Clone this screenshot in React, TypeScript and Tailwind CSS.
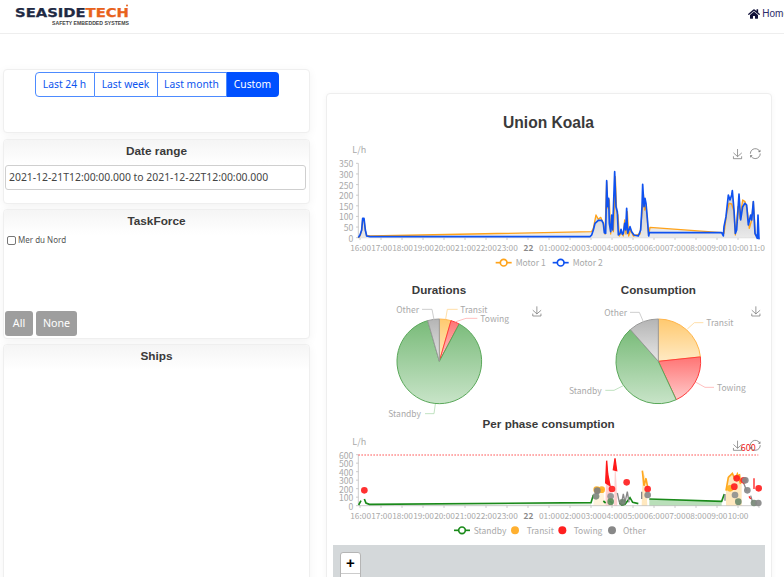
import React from "react";
import { FaHome } from "react-icons/fa";

const CHART_FONT = "'Noto Sans CJK SC', 'Noto Sans', sans-serif";
const HOURS = ["16:00","17:00","18:00","19:00","20:00","21:00","22:00","23:00","22","01:00","02:00","03:00","04:00","05:00","06:00","07:00","08:00","09:00","10:00","11:00"];
const GREY = "#a9a9a9";

function T({ x, y, children, anchor = "start", fill = GREY, size = 25.5, weight = 400, family = CHART_FONT }: any) {
  return (
    <text x={x} y={y} textAnchor={anchor} dominantBaseline="central" fill={fill} fontSize={size} fontWeight={weight} fontFamily={family}>
      {children}
    </text>
  );
}

function SaveIcon({ x, y }: { x: number; y: number }) {
  return (
    <g transform={`translate(${x} ${y}) scale(0.5)`} fill="none" stroke="#666" strokeWidth={4}>
      <path d="M4.7,22.9L29.3,45.5L54.7,23.4M4.6,43.6L4.6,58L53.8,58L53.8,43.6M29.2,45.1L29.2,0" />
    </g>
  );
}

function RestoreIcon({ x, y }: { x: number; y: number }) {
  return (
    <g transform={`translate(${x} ${y}) scale(0.53)`} fill="none" stroke="#666" strokeWidth={4}>
      <path d="M47,18.9h9.8V8.7M56.3,20.1C52.1,9,40.5,0.6,26.8,2.1C12.6,3.7,1.6,16.2,2.1,30.6M13,41.1H3.1v10.2M3.7,39.9c4.2,11.1,15.8,19.5,29.5,18c14.2-1.6,25.2-14.1,24.7-28.5" />
    </g>
  );
}

function Axes({ base, top, labels, hours, labelY }: { base: number; top: number; labels: string[]; hours: string[]; labelY: number }) {
  const step = (base - top) / (labels.length - 1);
  return (
    <g>
      <path d={`M85,${top}V${base}H1287`} fill="none" stroke="#b5b5b5" strokeWidth={2} />
      {labels.map((l, i) => (
        <g key={l}>
          <path d={`M78,${base - i * step}H85`} stroke="#b5b5b5" strokeWidth={2} />
          <T x={70} y={base - i * step} anchor="end" size={26}>{l}</T>
        </g>
      ))}
      {HOURS.map((_, i) => (
        <path key={i} d={`M${90 + 63 * i},${base}v7`} stroke="#b5b5b5" strokeWidth={2} />
      ))}
      {hours.map((h, i) => (
        <T key={i} x={92 + 62.9 * i} y={labelY} anchor="middle" size={25} weight={h === "22" ? 700 : 400} fill={h === "22" ? "#8a8a8a" : GREY}>{h}</T>
      ))}
    </g>
  );
}

const M2 = "85,293 90,285 95,270 98,235 102,235 106,270 110,288 120,290 780,290 785,285 790,270 795,250 805,241 815,241 820,250 823,278 827,280 830,122 833,200 836,175 838,250 842,275 845,225 848,270 854,95 858,200 862,215 865,285 870,280 873,268 877,283 880,280 884,250 887,270 890,205 893,280 897,270 900,260 905,275 912,285 925,288 932,270 936,200 938,133 942,200 945,175 948,190 952,235 956,288 958,278 1175,278 1180,288 1182,260 1188,230 1195,165 1200,180 1205,165 1207,152 1212,210 1216,280 1220,270 1227,162 1232,240 1238,200 1245,190 1250,195 1255,255 1262,225 1265,240 1270,185 1275,280 1282,295 1284,225 1287,298";
const M1 = "85,293 90,288 95,272 98,238 102,238 106,272 110,286 120,288 785,275 790,265 798,225 805,238 812,232 820,250 825,282 830,125 834,205 838,180 842,282 846,235 850,275 856,110 860,215 864,225 868,288 874,275 880,288 884,240 888,282 892,215 896,288 902,270 910,288 930,282 936,220 940,160 944,210 948,195 952,240 956,285 960,262 1175,278 1182,280 1190,220 1197,190 1205,192 1212,215 1216,285 1224,200 1230,235 1238,180 1245,185 1252,210 1258,265 1265,240 1270,185 1276,285 1284,290";

function TopChart() {
  return (
    <svg viewBox="0 0 1305 405" className="mb-[-1px] block h-[135px] w-[435px]">
      <defs>
        <linearGradient id="grey-area" gradientUnits="userSpaceOnUse" x1="0" y1="100" x2="0" y2="293">
          <stop offset="0" stopColor="#a0a0a8" />
          <stop offset="1" stopColor="#e8e8e8" />
        </linearGradient>
      </defs>
      <T x={67} y={27} size={27}>L/h</T>
      <Axes base={293} top={70} labels={["0","50","100","150","200","250","300","350"]} hours={HOURS} labelY={321} />
      <polygon points={`${M1} 1284,293 85,293`} fill="url(#grey-area)" opacity={0.7} />
      <polygon points={`${M2} 1287,293 85,293`} fill="url(#grey-area)" opacity={0.7} />
      <polyline points={M1} fill="none" stroke="#ffa31a" strokeWidth={4} strokeLinejoin="round" />
      <polyline points={M2} fill="none" stroke="#0f52f0" strokeWidth={5} strokeLinejoin="round" />
      <SaveIcon x={1208} y={27} />
      <RestoreIcon x={1260} y={25} />
      <path d="M497,368H545" stroke="#ffa31a" strokeWidth={5} />
      <circle cx={521} cy={368} r={10} fill="#fff" stroke="#ffa31a" strokeWidth={5} />
      <T x={557} y={367}>Motor 1</T>
      <path d="M668,368H716" stroke="#0f52f0" strokeWidth={5} />
      <circle cx={692} cy={368} r={10} fill="#fff" stroke="#0f52f0" strokeWidth={5} />
      <T x={728} y={367}>Motor 2</T>
    </svg>
  );
}

function slice(cx: number, cy: number, r: number, a: number, b: number) {
  const p = (d: number) => {
    const t = (d * Math.PI) / 180;
    return `${(cx + r * Math.sin(t)).toFixed(1)},${(cy - r * Math.cos(t)).toFixed(1)}`;
  };
  return `M${cx},${cy}L${p(a)}A${r},${r} 0 ${b - a > 180 ? 1 : 0} 1 ${p(b)}Z`;
}

function PieDefs() {
  const g = (id: string, a: string, b: string) => (
    <linearGradient id={id} x1="0" y1="0" x2="0" y2="1">
      <stop offset="0" stopColor={a} />
      <stop offset="1" stopColor={b} />
    </linearGradient>
  );
  return (
    <defs>
      {g("pie-green", "#79bb79", "#c8e4c8")}
      {g("pie-orange", "#ffc96f", "#ffeac4")}
      {g("pie-red", "#ff7474", "#ffcaca")}
      {g("pie-grey", "#b4b4b4", "#e6e6e6")}
    </defs>
  );
}

function Pie({ cx, angles }: { cx: number; angles: number[] }) {
  const cy = 262;
  const r = 127;
  const [a, b, c] = angles;
  return (
    <g strokeWidth={3}>
      <path d={slice(cx, cy, r, 0, a)} fill="url(#pie-orange)" stroke="#ffb54a" />
      <path d={slice(cx, cy, r, a, b)} fill="url(#pie-red)" stroke="#ff3d3d" />
      <path d={slice(cx, cy, r, b, c)} fill="url(#pie-green)" stroke="#5aa85a" />
      <path d={slice(cx, cy, r, c, 360)} fill="url(#pie-grey)" stroke="#9a9a9a" />
    </g>
  );
}

function Pies() {
  return (
    <div className="flex">
      <svg viewBox="-90 0 660 426" className="block h-[142px] w-[220px] overflow-visible">
        <PieDefs />
        <T x={237} y={45} anchor="middle" size={35} weight={700} fill="#3a3a3a" family="'Liberation Sans', sans-serif">Durations</T>
        <Pie cx={238} angles={[16, 28, 344]} />
        <path d="M186,106H216L222,137" fill="none" stroke="#c4c4c4" strokeWidth={2.5} />
        <path d="M293,106H262L257,135" fill="none" stroke="#ffd998" strokeWidth={2.5} />
        <path d="M352,133H318L288,143" fill="none" stroke="#ffb3b3" strokeWidth={2.5} />
        <path d="M195,419H222L226,390" fill="none" stroke="#b5dcb5" strokeWidth={2.5} />
        <T x={177} y={105} anchor="end">Other</T>
        <T x={301} y={105}>Transit</T>
        <T x={361} y={133}>Towing</T>
        <T x={183} y={418} anchor="end">Standby</T>
        <SaveIcon x={516} y={97} />
      </svg>
      <svg viewBox="570 0 660 426" className="block h-[142px] w-[220px] overflow-visible">
        <T x={895} y={45} anchor="middle" size={35} weight={700} fill="#3a3a3a" family="'Liberation Sans', sans-serif">Consumption</T>
        <Pie cx={895} angles={[84, 155, 318.6]} />
        <path d="M810,115H838L850,143" fill="none" stroke="#c4c4c4" strokeWidth={2.5} />
        <path d="M1030,146H1003L982,165" fill="none" stroke="#ffd998" strokeWidth={2.5} />
        <path d="M1062,340H1035L1008,325" fill="none" stroke="#ffb3b3" strokeWidth={2.5} />
        <path d="M736,349H762L790,335" fill="none" stroke="#b5dcb5" strokeWidth={2.5} />
        <T x={801} y={115} anchor="end">Other</T>
        <T x={1039} y={145}>Transit</T>
        <T x={1071} y={340}>Towing</T>
        <T x={725} y={348} anchor="end">Standby</T>
        <SaveIcon x={1173} y={97} />
      </svg>
    </div>
  );
}

const GREEN_AREA = "958,240 1175,247 1175,260 958,260";
const DOTS: [number, number, string][] = [
  [800, 212, "#ffb020"], [815, 212, "#ffb020"], [1200, 208, "#ffb020"],
  [103, 214, "#ff2020"], [846, 210, "#ff2020"], [890, 190, "#ff2020"], [953, 210, "#ff2020"],
  [1220, 178, "#ff2020"], [1213, 203, "#ff2020"], [1241, 184, "#ff2020"], [1286, 208, "#ff2020"],
  [798, 232, "#808a80"], [802, 215, "#808080"], [842, 232, "#909090"], [842, 248, "#5c8f5c"],
  [877, 250, "#708070"], [953, 228, "#888888"], [1246, 184, "#888888"], [1215, 228, "#909090"],
  [1225, 248, "#6c8a6c"], [1252, 214, "#888888"], [1272, 252, "#778877"], [1285, 252, "#888888"],
];

function PhaseChart() {
  const hours = HOURS.slice(0, 19);
  return (
    <svg viewBox="0 -9 1305 387" className="block h-[129px] w-[435px]">
      <T x={656} y={14} anchor="middle" size={35} weight={700} fill="#3a3a3a" family="'Liberation Sans', sans-serif">Per phase consumption</T>
      <T x={67} y={66} size={27}>L/h</T>
      <polygon points={GREEN_AREA} fill="#b9dfb9" />
      <polygon points="118,256 783,251 783,260 118,260" fill="#e4f2e4" />
      <polygon points="1188,215 1195,170 1205,165 1215,180 1222,165 1235,195 1235,260 1188,260" fill="#ffe8bf" />
      <polygon points="935,260 938,155 948,180 952,260" fill="#ffe8bf" />
      <polygon points="826,260 830,125 840,195 850,260" fill="#ffd0d0" />
      <polygon points="852,260 855,118 860,200 862,260" fill="#ffd0d0" />
      <polygon points="790,260 795,212 820,212 825,260" fill="#fff3dc" />
      <Axes base={260} top={107} labels={["0","100","200","300","400","500","600"]} hours={hours} labelY={287} />
      <path d="M85,108H1285" stroke="#ff5a5a" strokeWidth={3} strokeDasharray="5 4" />
      <T x={1255} y={85} anchor="middle" size={27} fill="#f02020">600</T>
      <path d="M86,258L93,245M103,240L108,252L118,256L783,251L790,228M820,246L827,252M838,245L848,253M868,252L876,258L885,256L900,236L908,250L925,254M958,240L1175,247L1183,225" fill="none" stroke="#1a8a1a" strokeWidth={5} />
      <path d="M862,222L868,250M875,250L880,225L885,250L892,218L897,250M935,240V218M1185,225V245M1240,190L1250,215M1262,230L1268,250" fill="none" stroke="#888" strokeWidth={4} />
      <path d="M794,212L805,206L820,214M1188,215L1195,175L1207,163L1215,180L1222,165L1232,195M1228,165L1232,190M937,155L942,200L948,178L953,205" fill="none" stroke="#ffa820" strokeWidth={5} />
      <path d="M830,125L827,192L840,200L833,165ZM855,118L850,152L860,155Z" fill="#ff1a1a" stroke="#ff1a1a" strokeWidth={4} />
      <path d="M1272,178V210M1257,232L1262,240" stroke="#ff2020" strokeWidth={4} />
      {DOTS.map(([x, y, c], i) => (
        <circle key={i} cx={x} cy={y} r={10} fill={c} opacity={0.92} />
      ))}
      <SaveIcon x={1208} y={65} />
      <RestoreIcon x={1260} y={63} />
      <path d="M372,334H420" stroke="#1a8a1a" strokeWidth={5} />
      <circle cx={396} cy={334} r={10} fill="#fff" stroke="#1a8a1a" strokeWidth={5} />
      <T x={431} y={333}>Standby</T>
      <circle cx={555} cy={334} r={12} fill="#ffb030" />
      <T x={590} y={333}>Transit</T>
      <circle cx={697} cy={334} r={12} fill="#ff2020" />
      <T x={731} y={333}>Towing</T>
      <circle cx={846} cy={334} r={12} fill="#888888" />
      <T x={879} y={333}>Other</T>
    </svg>
  );
}

function Logo() {
  return (
    <svg viewBox="0 0 120 26" className="block h-[26px] w-[120px]">
      <text x="0" y="15" fontFamily="'DejaVu Sans', sans-serif" fontWeight="700" fontSize="11.6" textLength="114" lengthAdjust="spacingAndGlyphs">
        <tspan fill="#1f2a44" stroke="#1f2a44" strokeWidth="0.25">SEASIDE</tspan>
        <tspan fill="#e8621c" stroke="#e8621c" strokeWidth="0.25">TECH</tspan>
      </text>
      <circle cx="112" cy="3.5" r="1" fill="#e8621c" />
      <text x="37" y="22.5" fill="#444" fontFamily="'Liberation Sans', sans-serif" fontWeight="700" fontSize="5.4" textLength="77" lengthAdjust="spacingAndGlyphs">SAFETY EMBEDDED SYSTEMS</text>
    </svg>
  );
}

function Card({ title, className, children }: { title?: string; className: string; children?: React.ReactNode }) {
  return (
    <section className={`rounded border border-[#efefef] bg-white shadow-[0_2px_10px_rgba(0,0,0,0.05)] ${className}`}>
      {title && (
        <h2 className="h-[25px] rounded-t bg-linear-to-b from-[#f5f5f5] to-white pt-[3px] text-center font-['Liberation_Sans',sans-serif] text-[11.8px] font-bold leading-[17px] text-[#3a3a3a]">
          {title}
        </h2>
      )}
      {children}
    </section>
  );
}

const RANGES = [
  { label: "Last 24 h", w: "w-[60px]", extra: "rounded-l" },
  { label: "Last week", w: "w-[63px]", extra: "border-l-0" },
  { label: "Last month", w: "w-[69px]", extra: "border-l-0" },
];

export default function App() {
  return (
    <div className="h-[577px] w-[784px] overflow-hidden bg-white font-['Noto_Sans',sans-serif]">
      <header className="flex h-[34px] items-start justify-between border-b border-[#eeeeee] pl-[15px] pr-0 pt-[2px]">
        <Logo />
        <a className="mr-[-5px] mt-[5px] flex shrink-0 items-center gap-[2px] font-['Liberation_Sans',sans-serif] text-[10px] leading-[14px] text-[#2b2b6b]">
          <FaHome className="h-[12px] w-[12px] text-[#12123a]" />
          Home
        </a>
      </header>
      <main className="flex items-start">
        <div className="ml-[3px] mt-[35px] flex w-[307px] flex-col">
          <Card className="flex h-[64px] justify-center">
            <div className="mt-[2px] flex h-[25px]">
              {RANGES.map((r) => (
                <button key={r.label} className={`${r.w} ${r.extra} border border-[#4d8bff] text-[10.3px] text-[#0d55ee]`}>
                  {r.label}
                </button>
              ))}
              <button className="w-[52px] rounded-r bg-[#0050ff] text-[10.3px] text-white">Custom</button>
            </div>
          </Card>
          <Card title="Date range" className="mt-[6px] h-[65px]">
            <div className="mx-[1px] flex h-[25px] w-[301px] items-center rounded-[3px] border border-[#cfcfcf] pl-[3px] text-[10.4px] text-[#444]">
              2021-12-21T12:00:00.000 to 2021-12-22T12:00:00.000
            </div>
          </Card>
          <Card title="TaskForce" className="mt-[5px] h-[130px]">
            <label className="ml-[3px] mt-[-1px] flex items-center gap-[2px] text-[8px] leading-[12px] text-[#555]">
              <span className="h-[9px] w-[9px] rounded-[2px] border border-[#777] bg-white" />
              Mer du Nord
            </label>
            <div className="mt-[65px] flex gap-[3px] pl-[1px]">
              <button className="h-[25px] w-[28px] rounded-[3px] bg-[#9e9e9e] text-[10.7px] text-white">All</button>
              <button className="h-[25px] w-[41px] rounded-[3px] bg-[#9e9e9e] text-[10.7px] text-white">None</button>
            </div>
          </Card>
          <Card title="Ships" className="mt-[5px] h-[300px]" />
        </div>
        <div className="ml-[16px] mt-[59px] h-[600px] w-[446px] rounded border border-[#eeeeee] bg-white pl-[3px] shadow-[0_1px_6px_rgba(0,0,0,0.04)]">
          <h1 className="h-[46px] pr-[4px] pt-[20px] text-center font-['Liberation_Sans',sans-serif] text-[15.6px] font-bold leading-[18px] text-[#3a3a3a]">
            Union Koala
          </h1>
          <TopChart />
          <Pies />
          <PhaseChart />
          <div className="ml-[3px] h-[60px] w-[432px] bg-[#d4d8da] pl-[7px] pt-[7px]">
            <div className="w-[21px] overflow-hidden rounded-[3px] border border-[#b5b5b5] bg-white">
              <div className="flex h-[21px] items-center justify-center border-b border-[#ccc] font-['Liberation_Sans',sans-serif] text-[15px] font-bold text-black">+</div>
              <div className="h-[21px]" />
            </div>
          </div>
        </div>
      </main>
    </div>
  );
}
